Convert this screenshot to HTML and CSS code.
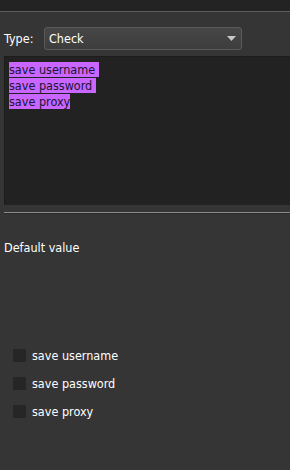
FILE: index.html
```html
<!DOCTYPE html>
<html>
<head>
<meta charset="utf-8">
<link rel="stylesheet" href="styles.css">
</head>
<body>
<div class="topbar"></div>
<div class="panel">
  <div class="type-row">
    <span class="type-label">Type:</span>
    <div class="combo">
      <span>Check</span>
      <svg class="arrow" width="9" height="5" viewBox="0 0 9 5"><path d="M0 0H9L4.5 5Z" fill="#c8c8c8"/></svg>
    </div>
  </div>
  <div class="editor">
    <div class="line"><span class="sel">save username </span></div>
    <div class="line"><span class="sel">save password </span></div>
    <div class="line"><span class="sel">save proxy</span></div>
  </div>
  <div class="sep"></div>
  <div class="default-label">Default value</div>
  <div class="checks">
    <label class="check"><span class="box"></span><span>save username</span></label>
    <label class="check"><span class="box"></span><span>save password</span></label>
    <label class="check"><span class="box"></span><span>save proxy</span></label>
  </div>
</div>
</body>
</html>
```
FILE: styles.css
```css
html, body {
  margin: 0;
  padding: 0;
  background: #353535;
  font-family: "DejaVu Sans Condensed", "DejaVu Sans", sans-serif;
  font-size: 12.5px;
  color: #ffffff;
  overflow: hidden;
  width: 290px;
  height: 470px;
}
.topbar {
  height: 11px;
  background: #232323;
  border-bottom: 1px solid #5e5e5e;
}
.panel {
  display: flex;
  flex-direction: column;
  padding-left: 4px;
}
.type-row {
  display: flex;
  align-items: center;
  margin-top: 15px;
  height: 23px;
}
.type-label {
  width: 40px;
}
.combo {
  box-sizing: border-box;
  width: 198px;
  height: 23px;
  border: 1px solid #5a5a5a;
  border-radius: 3px;
  background: linear-gradient(#474747, #3d3d3d);
  display: flex;
  align-items: center;
  justify-content: space-between;
  padding: 0 5px 0 4px;
  color: #ffffff;
}
.arrow {
  display: block;
}
.editor {
  margin-top: 6px;
  height: 149px;
  background: #222222;
  border-top: 1px solid #1c1c1c;
  border-left: 1px solid #1c1c1c;
  padding: 5px 0 0 4px;
  box-sizing: border-box;
}
.line {
  height: 16px;
  line-height: 16px;
}
.sel {
  background: #c866ff;
  color: #1a1530;
  white-space: pre;
}
.sep {
  margin-top: 7px;
  height: 1px;
  background: #8c8c8c;
  border-bottom: 1px solid #2a2a2a;
}
.default-label {
  margin-top: 26px;
  line-height: 16px;
}
.checks {
  display: flex;
  flex-direction: column;
  gap: 15px;
  margin-top: 93px;
  padding-left: 9px;
}
.check {
  display: flex;
  align-items: center;
  gap: 6px;
  height: 13px;
}
.box {
  width: 13px;
  height: 13px;
  background: #262626;
}
```
